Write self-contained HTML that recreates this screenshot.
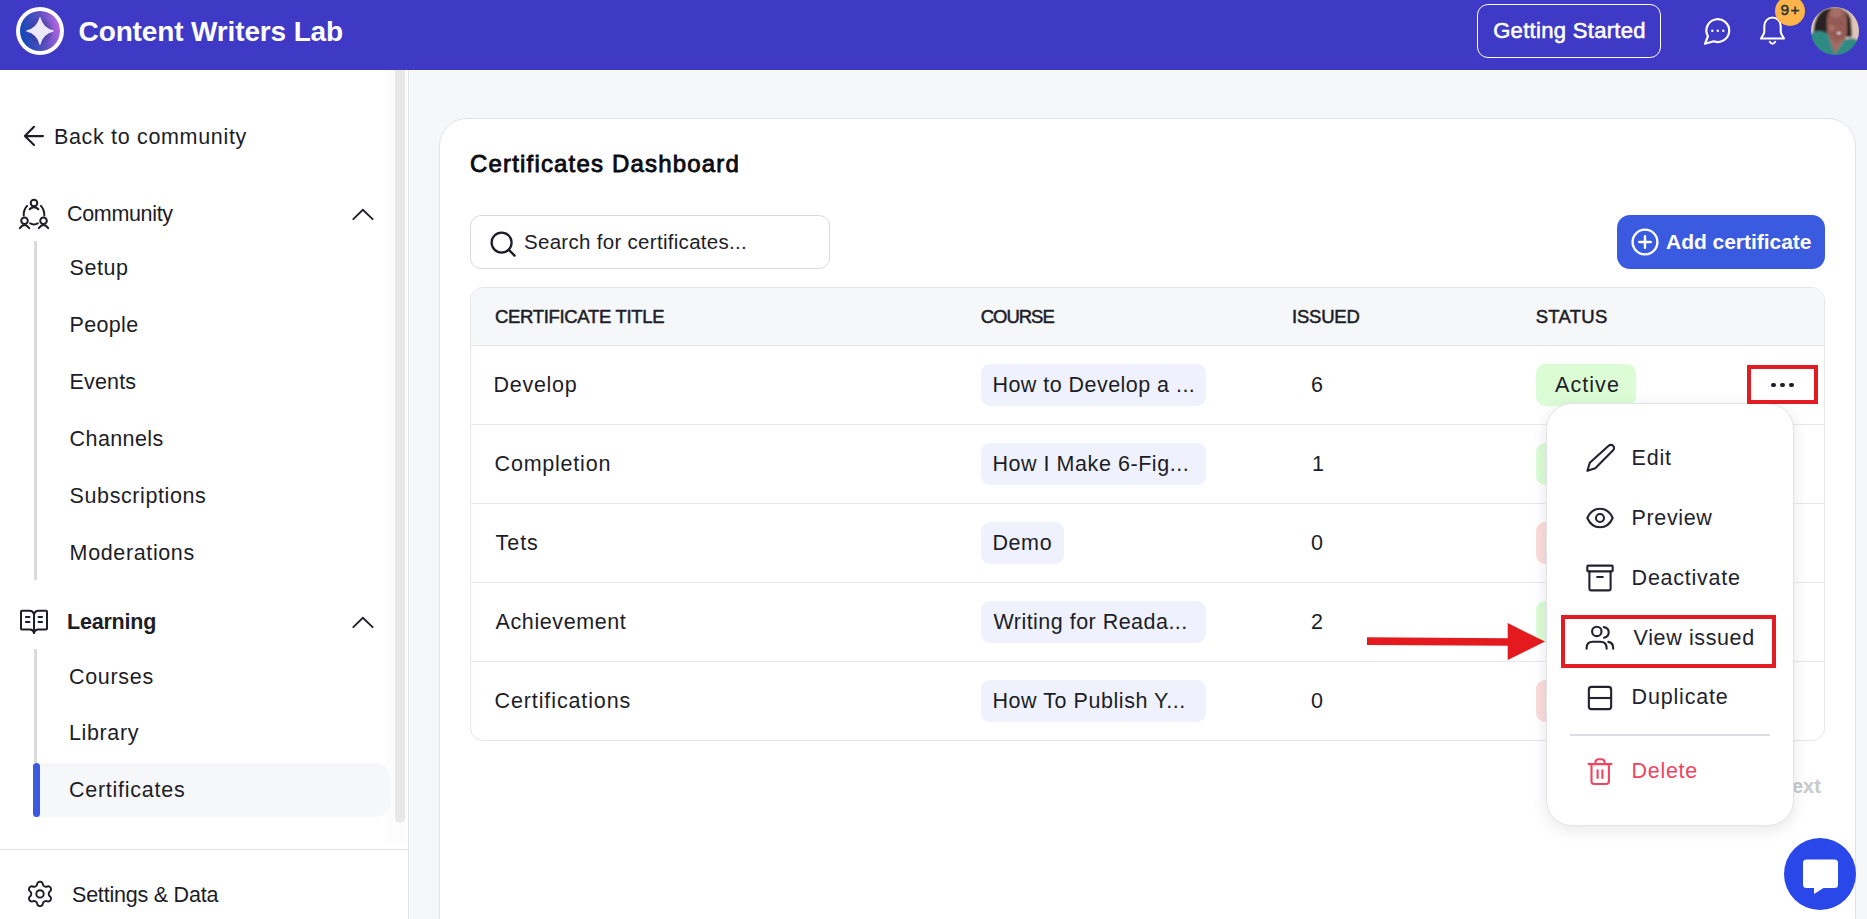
<!DOCTYPE html>
<html><head><meta charset="utf-8"><style>
*{box-sizing:border-box;margin:0;padding:0}
html,body{width:1867px;height:919px;overflow:hidden;background:#f6f7f9;font-family:"Liberation Sans",sans-serif;color:#1d1d27}
.a{position:absolute;white-space:nowrap}
.b{position:absolute}
svg{position:absolute;overflow:visible}
</style></head><body>
<div class="b" style="left:0;top:0;width:1867px;height:70px;background:#3e3ac6"></div>
<svg style="left:0;top:0" width="80" height="70" viewBox="0 0 80 70">
<defs><linearGradient id="lg" x1="0" y1="0.3" x2="1" y2="0.1"><stop offset="0" stop-color="#1848b8"/><stop offset="0.5" stop-color="#5a4fc0"/><stop offset="1" stop-color="#c46ae6"/></linearGradient>
<radialGradient id="rg" cx="0.5" cy="0.5" r="0.5"><stop offset="0.3" stop-color="#2a2070" stop-opacity="0.55"/><stop offset="1" stop-color="#2a2070" stop-opacity="0"/></radialGradient></defs>
<circle cx="40" cy="31" r="24" fill="#fff"/>
<circle cx="40" cy="31" r="20" fill="url(#lg)"/>
<circle cx="40" cy="31" r="14" fill="url(#rg)"/>
<path d="M40 17.9 Q42.6 28.2 53.3 31 Q42.6 33.8 40 44.2 Q37.4 33.8 26.7 31 Q37.4 28.2 40 17.9Z" fill="#ece8fb" stroke="#ece8fb" stroke-width="1.2" stroke-linejoin="round"/>
</svg>
<div class="a" style="left:78.60px;top:18.10px;font-size:28px;line-height:28px;font-weight:700;color:#fff;letter-spacing:-0.139px;">Content Writers Lab</div>

<div class="b" style="left:1477px;top:4px;width:184px;height:54px;border:1.5px solid #fff;border-radius:11px"></div>
<div class="a" style="left:1493.20px;top:19.58px;font-size:22px;line-height:22px;color:#fff;letter-spacing:0.314px;-webkit-text-stroke:0.55px #fff;">Getting Started</div>

<svg style="left:1699px;top:11px" width="36" height="36" viewBox="0 0 36 36">
<path d="M8.9 25.25 L6 32.8 L14.85 30.26 A11.4 11.4 0 1 0 8.9 25.25 Z" fill="none" stroke="#fff" stroke-width="2.2" stroke-linejoin="round"/>
<circle cx="13.3" cy="19.8" r="1.2" fill="#fff"/><circle cx="18.8" cy="19.8" r="1.2" fill="#fff"/><circle cx="24.3" cy="19.8" r="1.2" fill="#fff"/>
</svg>
<svg style="left:1755px;top:14px" width="36" height="36" viewBox="0 0 36 36">
<path d="M6 24.5 L29 24.5 L26.6 20.5 C26 19.5 25.7 18.5 25.7 17 L25.7 12 C25.7 7 21.8 3.5 17.5 3.5 C13.2 3.5 9.3 7 9.3 12 L9.3 17 C9.3 18.5 9 19.5 8.4 20.5 Z" fill="none" stroke="#fff" stroke-width="2.1" stroke-linejoin="round"/>
<path d="M14.8 27.8 C15.8 29.4 17 29.8 17.5 29.8 C18 29.8 19.2 29.4 20.2 27.8" fill="none" stroke="#fff" stroke-width="2.1" stroke-linecap="round"/>
</svg>
<div class="b" style="left:1775px;top:-4px;width:30px;height:30px;border-radius:50%;background:#fdb54b"></div>
<div class="a" style="left:1780.50px;top:1.88px;font-size:15.5px;line-height:15.5px;color:#263238;letter-spacing:1.300px;-webkit-text-stroke:0.45px #263238;">9+</div>

<svg style="left:1811px;top:7px" width="48" height="48" viewBox="0 0 48 48">
<defs><clipPath id="av"><circle cx="24" cy="24" r="24"/></clipPath><filter id="bl" x="-10%" y="-10%" width="120%" height="120%"><feGaussianBlur stdDeviation="1.0"/></filter></defs>
<g clip-path="url(#av)"><g filter="url(#bl)">
<rect x="-2" y="-2" width="52" height="52" fill="#ead8cd"/>
<rect x="37" y="-2" width="13" height="52" fill="#dfc6b9"/>
<path d="M3 32 C1 16 6 4 17 1 C27 -1 37 2 40 12 L41 30 L35 30 L34 10 L18 8 L17 30 Z" fill="#2b2320"/>
<path d="M16 13 C16 5 20 0 26 0 C32 0 36 5 36 13 L36 25 C36 32 32 37 26.5 37 C21 37 17 32 16 25Z" fill="#955b54"/>
<ellipse cx="25" cy="6" rx="6" ry="5" fill="#a8766c" opacity="0.8"/>
<ellipse cx="21" cy="21" rx="3" ry="3" fill="#b27a70" opacity="0.7"/>
<path d="M21 16 L24 15.5 M28 15.5 L31 16" stroke="#6b3f3a" stroke-width="1.2" opacity="0.6"/>
<ellipse cx="27.5" cy="26.5" rx="3.6" ry="2" fill="#7a2e36"/>
<ellipse cx="27.8" cy="26.2" rx="2.4" ry="1" fill="#fff"/>
<path d="M-2 28 C3 23 11 23 17 27 L24 46 L33 33 C39 30 45 31 50 35 L50 50 L-2 50Z" fill="#2f8b84"/>
<path d="M17 27 L23.5 47 L33 33 L33 30 C30 34 28 35 25 35 C21 34 18.5 30 17 25Z" fill="#a06a60"/>
</g></g></svg>
<div class="b" style="left:0;top:70px;width:408px;height:849px;background:#fff"></div>
<div class="b" style="left:408px;top:70px;width:1px;height:849px;background:#e4e5ea"></div>
<div class="b" style="left:386px;top:70px;width:20.5px;height:774px;background:#fcfcfc"></div>
<div class="b" style="left:395px;top:70px;width:10px;height:753px;background:#e8e8e8;border-radius:0 0 5px 5px"></div>
<div class="b" style="left:0;top:849px;width:408px;height:1px;background:#e1e2e7"></div>
<svg style="left:20px;top:122px" width="28" height="28" viewBox="0 0 28 28">
<path d="M23 14.1 L5.2 14.1 M14 4.8 L4.9 14.1 L14 23.1" fill="none" stroke="#1d1d27" stroke-width="2.1" stroke-linecap="round" stroke-linejoin="round"/></svg>
<div class="a" style="left:53.90px;top:126.80px;font-size:21.5px;line-height:21.5px;color:#1d1d27;letter-spacing:0.675px;">Back to community</div>

<svg style="left:17px;top:197px" width="34" height="34" viewBox="0 0 34 34">
<g fill="none" stroke="#1d1d27" stroke-width="2" stroke-linecap="round">
<circle cx="17" cy="6" r="3.3"/>
<path d="M12.6 12.2 Q17 8 21.4 12.2"/>
<path d="M10.1 8.9 Q6.6 12.5 6.7 18.5"/>
<path d="M23.9 8.9 Q27.4 12.5 27.3 18.5"/>
<circle cx="7.5" cy="23.7" r="3.3"/>
<circle cx="26.5" cy="23.7" r="3.3"/>
<path d="M2.8 31.1 Q7.5 24.9 12.2 31.1"/>
<path d="M21.8 31.1 Q26.5 24.9 31.2 31.1"/>
<path d="M13.2 26.4 Q17 28.4 20.8 26.4"/>
</g></svg>
<div class="a" style="left:67.00px;top:203.80px;font-size:21.5px;line-height:21.5px;color:#1d1d27;letter-spacing:-0.338px;">Community</div>

<svg style="left:350px;top:201.5px" width="26" height="24" viewBox="0 0 26 24">
<path d="M3.3 17.1 L12.9 7.9 L22.6 17.1" fill="none" stroke="#1d1d27" stroke-width="1.9" stroke-linecap="round" stroke-linejoin="miter"/></svg>
<svg style="left:350px;top:610px" width="26" height="24" viewBox="0 0 26 24">
<path d="M3.3 17.1 L12.9 7.9 L22.6 17.1" fill="none" stroke="#1d1d27" stroke-width="1.9" stroke-linecap="round" stroke-linejoin="miter"/></svg>
<div class="b" style="left:34px;top:241px;width:3px;height:339px;background:#dcd9da"></div>
<div class="a" style="left:69.60px;top:257.70px;font-size:21.5px;line-height:21.5px;color:#1d1d27;letter-spacing:0.525px;">Setup</div>

<div class="a" style="left:69.60px;top:314.70px;font-size:21.5px;line-height:21.5px;color:#1d1d27;letter-spacing:0.320px;">People</div>

<div class="a" style="left:69.60px;top:371.70px;font-size:21.5px;line-height:21.5px;color:#1d1d27;letter-spacing:0.140px;">Events</div>

<div class="a" style="left:69.60px;top:428.70px;font-size:21.5px;line-height:21.5px;color:#1d1d27;letter-spacing:0.400px;">Channels</div>

<div class="a" style="left:69.60px;top:485.70px;font-size:21.5px;line-height:21.5px;color:#1d1d27;letter-spacing:0.600px;">Subscriptions</div>

<div class="a" style="left:69.60px;top:542.70px;font-size:21.5px;line-height:21.5px;color:#1d1d27;letter-spacing:0.630px;">Moderations</div>

<svg style="left:17px;top:606px" width="34" height="32" viewBox="0 0 34 32">
<g fill="none" stroke="#1d1d27" stroke-width="2" stroke-linejoin="round" stroke-linecap="round">
<path d="M17 8.5 Q16 4.8 12.5 4.8 L5 4.8 Q4 4.8 4 5.8 L4 22.5 Q4 23.5 5 23.5 L13 23.5 Q16 23.5 17 26.8"/>
<path d="M17 8.5 Q18 4.8 21.5 4.8 L29 4.8 Q30 4.8 30 5.8 L30 22.5 Q30 23.5 29 23.5 L21 23.5 Q18 23.5 17 26.8"/>
<path d="M17 8.5 L17 26.8"/>
<path d="M9 11 L12.4 11 M9 16 L12.4 16 M21.6 11 L25 11 M21.6 16 L25 16" stroke-width="2.2"/>
</g></svg>
<div class="a" style="left:67.00px;top:611.80px;font-size:21.5px;line-height:21.5px;font-weight:700;color:#1d1d27;letter-spacing:-0.200px;">Learning</div>

<div class="b" style="left:34px;top:649px;width:3px;height:114px;background:#dcd9da"></div>
<div class="b" style="left:33px;top:763px;width:357px;height:54px;background:#f6f7f9;border-radius:0 14px 14px 0"></div>
<div class="b" style="left:33px;top:763px;width:7px;height:54px;background:#3a5ae0;border-radius:4px"></div>
<div class="a" style="left:69.00px;top:666.60px;font-size:21.5px;line-height:21.5px;color:#1d1d27;letter-spacing:0.683px;">Courses</div>

<div class="a" style="left:69.00px;top:723.20px;font-size:21.5px;line-height:21.5px;color:#1d1d27;letter-spacing:0.617px;">Library</div>

<div class="a" style="left:69.00px;top:779.80px;font-size:21.5px;line-height:21.5px;color:#1d1d27;letter-spacing:0.736px;">Certificates</div>

<svg style="left:24px;top:877px" width="32" height="34" viewBox="0 0 32 34">
<g fill="none" stroke="#1d1d27" stroke-width="1.9" stroke-linejoin="round">
<path d="M24.75 16.90 L24.78 17.28 L24.86 17.68 L25.00 18.08 L25.20 18.52 L25.49 19.00 L26.14 19.62 L26.76 20.29 L26.95 20.89 L27.01 21.46 L26.97 22.02 L26.83 22.54 L26.61 23.02 L26.30 23.46 L25.92 23.84 L25.46 24.16 L24.93 24.39 L24.31 24.52 L23.42 24.32 L22.57 24.07 L22.01 24.06 L21.53 24.10 L21.10 24.19 L20.72 24.31 L20.38 24.48 L20.06 24.69 L19.76 24.96 L19.47 25.29 L19.20 25.68 L18.92 26.17 L18.72 27.04 L18.44 27.91 L18.02 28.38 L17.56 28.72 L17.06 28.96 L16.53 29.10 L16.00 29.15 L15.47 29.10 L14.94 28.96 L14.44 28.72 L13.98 28.38 L13.56 27.91 L13.28 27.04 L13.08 26.17 L12.80 25.68 L12.53 25.29 L12.24 24.96 L11.94 24.69 L11.63 24.48 L11.28 24.31 L10.90 24.19 L10.47 24.10 L9.99 24.06 L9.43 24.07 L8.58 24.32 L7.69 24.52 L7.07 24.39 L6.54 24.16 L6.08 23.84 L5.70 23.46 L5.39 23.03 L5.17 22.54 L5.03 22.02 L4.99 21.46 L5.05 20.89 L5.24 20.29 L5.86 19.62 L6.51 19.00 L6.80 18.52 L7.00 18.08 L7.14 17.68 L7.22 17.28 L7.25 16.90 L7.22 16.52 L7.14 16.12 L7.00 15.72 L6.80 15.28 L6.51 14.80 L5.86 14.18 L5.24 13.51 L5.05 12.91 L4.99 12.34 L5.03 11.78 L5.17 11.26 L5.39 10.77 L5.70 10.34 L6.08 9.96 L6.54 9.64 L7.07 9.41 L7.69 9.28 L8.58 9.48 L9.43 9.73 L9.99 9.74 L10.47 9.70 L10.90 9.61 L11.28 9.49 L11.62 9.32 L11.94 9.11 L12.24 8.84 L12.53 8.51 L12.80 8.12 L13.08 7.63 L13.28 6.76 L13.56 5.89 L13.98 5.42 L14.44 5.08 L14.94 4.84 L15.47 4.70 L16.00 4.65 L16.53 4.70 L17.06 4.84 L17.56 5.08 L18.02 5.42 L18.44 5.89 L18.72 6.76 L18.92 7.63 L19.20 8.12 L19.47 8.51 L19.76 8.84 L20.06 9.11 L20.37 9.32 L20.72 9.49 L21.10 9.61 L21.53 9.70 L22.01 9.74 L22.57 9.73 L23.42 9.48 L24.31 9.28 L24.93 9.41 L25.46 9.64 L25.92 9.96 L26.30 10.34 L26.61 10.78 L26.83 11.26 L26.97 11.78 L27.01 12.34 L26.95 12.91 L26.76 13.51 L26.14 14.18 L25.49 14.80 L25.20 15.28 L25.00 15.72 L24.86 16.12 L24.78 16.52Z"/>
<circle cx="16" cy="16.9" r="3.7"/>
</g></svg>
<div class="a" style="left:72.00px;top:885.30px;font-size:21.5px;line-height:21.5px;color:#1d1d27;letter-spacing:-0.214px;">Settings &amp; Data</div>

<div class="b" style="left:439px;top:118px;width:1417px;height:850px;background:#fff;border:1px solid #e1e2e8;border-radius:28px"></div>
<div class="a" style="left:470.00px;top:151.88px;font-size:24px;line-height:24px;color:#0b0b12;letter-spacing:1.174px;-webkit-text-stroke:0.85px #0b0b12;">Certificates Dashboard</div>

<div class="b" style="left:470px;top:215px;width:360px;height:54px;border:1px solid #d9dae1;border-radius:11px;background:#fff"></div>
<svg style="left:486px;top:227px" width="34" height="34" viewBox="0 0 34 34">
<circle cx="15.6" cy="15.6" r="10" fill="none" stroke="#1d1d27" stroke-width="2.3"/>
<path d="M22.8 22.8 L28.6 28.6" stroke="#1d1d27" stroke-width="2.4" stroke-linecap="round"/></svg>
<div class="a" style="left:524.00px;top:231.55px;font-size:20.5px;line-height:20.5px;color:#1d1d27;letter-spacing:0.298px;">Search for certificates...</div>

<div class="b" style="left:1617px;top:215px;width:208px;height:54px;background:#3a5ae0;border-radius:13px"></div>
<svg style="left:1629px;top:226px" width="32" height="32" viewBox="0 0 32 32">
<circle cx="16" cy="16" r="12.4" fill="none" stroke="#fff" stroke-width="2.4"/>
<path d="M16 10.2 L16 21.8 M10.2 16 L21.8 16" stroke="#fff" stroke-width="2.4" stroke-linecap="round"/></svg>
<div class="a" style="left:1666.00px;top:231.12px;font-size:21px;line-height:21px;font-weight:700;color:#fff;letter-spacing:-0.029px;">Add certificate</div>

<div class="b" style="left:470px;top:287px;width:1355px;height:454px;border:1px solid #e5e6eb;border-radius:13px;overflow:hidden;background:#fff"><div class="b" style="left:0;top:0;width:1355px;height:58px;background:#f6f7f9;border-bottom:1px solid #e5e6eb"></div><div class="b" style="left:0;top:136px;width:1355px;height:1px;background:#e7e8ec"></div><div class="b" style="left:0;top:215px;width:1355px;height:1px;background:#e7e8ec"></div><div class="b" style="left:0;top:294px;width:1355px;height:1px;background:#e7e8ec"></div><div class="b" style="left:0;top:373px;width:1355px;height:1px;background:#e7e8ec"></div></div>
<div class="a" style="left:495.00px;top:307.74px;font-size:18.5px;line-height:18.5px;color:#1d1d27;letter-spacing:-0.325px;-webkit-text-stroke:0.5px #1d1d27;">CERTIFICATE TITLE</div>

<div class="a" style="left:980.70px;top:307.74px;font-size:18.5px;line-height:18.5px;color:#1d1d27;letter-spacing:-1.020px;-webkit-text-stroke:0.5px #1d1d27;">COURSE</div>

<div class="a" style="left:1292.00px;top:307.74px;font-size:18.5px;line-height:18.5px;color:#1d1d27;letter-spacing:-0.220px;-webkit-text-stroke:0.5px #1d1d27;">ISSUED</div>

<div class="a" style="left:1535.70px;top:307.74px;font-size:18.5px;line-height:18.5px;color:#1d1d27;letter-spacing:0.280px;-webkit-text-stroke:0.5px #1d1d27;">STATUS</div>

<div class="a" style="left:493.60px;top:375.00px;font-size:21.5px;line-height:21.5px;color:#1d1d27;letter-spacing:0.700px;">Develop</div>

<div class="b" style="left:981px;top:364.0px;width:225px;height:42px;background:#eff2fd;border-radius:9px"></div>
<div class="a" style="left:992.40px;top:375.00px;font-size:21.5px;line-height:21.5px;color:#1d1d27;letter-spacing:0.466px;">How to Develop a ...</div>

<div class="a" style="left:1311.10px;top:375.00px;font-size:21.5px;line-height:21.5px;color:#1d1d27;">6</div>

<div class="b" style="left:1536px;top:364.0px;width:100px;height:42px;background:#dcfcd6;border-radius:9px"></div>
<div class="a" style="left:1555.00px;top:375.00px;font-size:21.5px;line-height:21.5px;color:#1d1d27;letter-spacing:1.060px;">Active</div>

<div class="a" style="left:494.60px;top:454.00px;font-size:21.5px;line-height:21.5px;color:#1d1d27;letter-spacing:0.778px;">Completion</div>

<div class="b" style="left:981px;top:443.0px;width:225px;height:42px;background:#eff2fd;border-radius:9px"></div>
<div class="a" style="left:992.40px;top:454.00px;font-size:21.5px;line-height:21.5px;color:#1d1d27;letter-spacing:0.550px;">How I Make 6-Fig...</div>

<div class="a" style="left:1312.00px;top:454.00px;font-size:21.5px;line-height:21.5px;color:#1d1d27;">1</div>

<div class="b" style="left:1536px;top:443.0px;width:100px;height:42px;background:#dcfcd6;border-radius:9px"></div>
<div class="a" style="left:495.60px;top:533.00px;font-size:21.5px;line-height:21.5px;color:#1d1d27;letter-spacing:0.933px;">Tets</div>

<div class="b" style="left:981px;top:522.0px;width:82.5px;height:42px;background:#eff2fd;border-radius:9px"></div>
<div class="a" style="left:992.40px;top:533.00px;font-size:21.5px;line-height:21.5px;color:#1d1d27;letter-spacing:0.617px;">Demo</div>

<div class="a" style="left:1311.10px;top:533.00px;font-size:21.5px;line-height:21.5px;color:#1d1d27;">0</div>

<div class="b" style="left:1536px;top:522.0px;width:100px;height:42px;background:#fbdcdc;border-radius:9px"></div>
<div class="a" style="left:495.60px;top:612.00px;font-size:21.5px;line-height:21.5px;color:#1d1d27;letter-spacing:0.590px;">Achievement</div>

<div class="b" style="left:981px;top:601.0px;width:225px;height:42px;background:#eff2fd;border-radius:9px"></div>
<div class="a" style="left:993.40px;top:612.00px;font-size:21.5px;line-height:21.5px;color:#1d1d27;letter-spacing:0.476px;">Writing for Reada...</div>

<div class="a" style="left:1311.10px;top:612.00px;font-size:21.5px;line-height:21.5px;color:#1d1d27;">2</div>

<div class="b" style="left:1536px;top:601.0px;width:100px;height:42px;background:#dcfcd6;border-radius:9px"></div>
<div class="a" style="left:494.60px;top:691.00px;font-size:21.5px;line-height:21.5px;color:#1d1d27;letter-spacing:0.877px;">Certifications</div>

<div class="b" style="left:981px;top:680.0px;width:225px;height:42px;background:#eff2fd;border-radius:9px"></div>
<div class="a" style="left:992.40px;top:691.00px;font-size:21.5px;line-height:21.5px;color:#1d1d27;letter-spacing:0.556px;">How To Publish Y...</div>

<div class="a" style="left:1311.10px;top:691.00px;font-size:21.5px;line-height:21.5px;color:#1d1d27;">0</div>

<div class="b" style="left:1536px;top:680.0px;width:100px;height:42px;background:#fbdcdc;border-radius:9px"></div>
<div class="b" style="left:1771.2px;top:382.7px;width:4.6px;height:4.6px;border-radius:50%;background:#1d1d27"></div>
<div class="b" style="left:1780.2px;top:382.7px;width:4.6px;height:4.6px;border-radius:50%;background:#1d1d27"></div>
<div class="b" style="left:1789.2px;top:382.7px;width:4.6px;height:4.6px;border-radius:50%;background:#1d1d27"></div>
<div class="a" style="left:1792.00px;top:776.37px;font-size:20px;line-height:20px;font-weight:700;color:#c9cacd;">ext</div>

<div class="b" style="left:1545.5px;top:403px;width:248px;height:423px;background:#fff;border:1px solid #e2e3e8;border-radius:26px;box-shadow:0 4px 16px rgba(20,20,40,0.10)"></div>
<svg style="left:1582px;top:440px" width="36" height="36" viewBox="0 0 36 36">
<path d="M26.6 5.8 C27.9 4.5 29.9 4.5 31.1 5.8 C32.4 7.1 32.4 9 31.1 10.3 L13.3 28.2 L5.4 30.8 L7.8 22.8 Z" fill="none" stroke="#23232f" stroke-width="2.1" stroke-linejoin="round"/></svg>
<div class="a" style="left:1631.60px;top:447.60px;font-size:21.5px;line-height:21.5px;color:#23232f;letter-spacing:0.767px;">Edit</div>

<svg style="left:1582px;top:500px" width="36" height="36" viewBox="0 0 36 36">
<path d="M5.3 18 C8 11.8 12.7 8.7 18 8.7 C23.3 8.7 28 11.8 30.7 18 C28 24.2 23.3 27.3 18 27.3 C12.7 27.3 8 24.2 5.3 18 Z" fill="none" stroke="#23232f" stroke-width="2.1" stroke-linejoin="round"/>
<circle cx="18" cy="18" r="4" fill="none" stroke="#23232f" stroke-width="2.1"/></svg>
<div class="a" style="left:1631.60px;top:508.30px;font-size:21.5px;line-height:21.5px;color:#23232f;letter-spacing:0.617px;">Preview</div>

<svg style="left:1582px;top:560px" width="36" height="36" viewBox="0 0 36 36">
<g fill="none" stroke="#23232f" stroke-width="2.1" stroke-linejoin="round" stroke-linecap="round">
<rect x="5.3" y="5.6" width="25.4" height="5.8" rx="1.2"/>
<path d="M7.4 11.4 L7.4 28.5 Q7.4 30.4 9.3 30.4 L26.7 30.4 Q28.6 30.4 28.6 28.5 L28.6 11.4"/>
<path d="M15.2 17 L20.8 17"/></g></svg>
<div class="a" style="left:1631.60px;top:568.30px;font-size:21.5px;line-height:21.5px;color:#23232f;letter-spacing:0.756px;">Deactivate</div>

<svg style="left:1582px;top:620px" width="36" height="36" viewBox="0 0 36 36">
<g fill="none" stroke="#23232f" stroke-width="2.1" stroke-linecap="round" stroke-linejoin="round">
<circle cx="14.8" cy="11.4" r="4.7"/>
<path d="M4.6 28.8 L4.6 28 Q4.6 21.8 11 21.8 L18.2 21.8 Q24.6 21.8 24.6 28 L24.6 28.8"/>
<path d="M21.8 7.1 Q26.7 7.9 26.7 12.3 Q26.7 16.8 22 17.7"/>
<path d="M26.3 21.9 Q31.2 22.8 31.2 28 L31.2 28.8"/></g></svg>
<div class="a" style="left:1633.60px;top:628.40px;font-size:21.5px;line-height:21.5px;color:#23232f;letter-spacing:0.620px;">View issued</div>

<svg style="left:1582px;top:680px" width="36" height="36" viewBox="0 0 36 36">
<g fill="none" stroke="#23232f" stroke-width="2.1" stroke-linejoin="round">
<rect x="6.85" y="6.85" width="22.3" height="22.3" rx="2.6"/>
<path d="M6.85 18 L29.15 18"/></g></svg>
<div class="a" style="left:1631.60px;top:687.20px;font-size:21.5px;line-height:21.5px;color:#23232f;letter-spacing:0.812px;">Duplicate</div>

<div class="b" style="left:1570px;top:734px;width:200px;height:2px;background:#dcdde3"></div>
<svg style="left:1582px;top:754px" width="36" height="36" viewBox="0 0 36 36">
<g fill="none" stroke="#ee4662" stroke-width="2.1" stroke-linecap="round" stroke-linejoin="round">
<path d="M6.5 10.1 L29.5 10.1"/>
<path d="M13.4 10.1 L13.4 8.6 Q13.4 5.3 16.7 5.3 L19.3 5.3 Q22.6 5.3 22.6 8.6 L22.6 10.1"/>
<path d="M9.5 10.1 L9.5 27.3 Q9.5 30 12.2 30 L24.2 30 Q26.9 30 26.9 27.3 L26.9 10.1"/>
<path d="M15.6 16.3 L15.6 23.9 M20.4 16.3 L20.4 23.9"/></g></svg>
<div class="a" style="left:1631.60px;top:760.60px;font-size:21.5px;line-height:21.5px;color:#ee4662;letter-spacing:0.680px;">Delete</div>

<div class="b" style="left:1747px;top:365px;width:71px;height:38.8px;border:4.6px solid #e31b23"></div>
<div class="b" style="left:1561px;top:615px;width:215px;height:52.6px;border:4.7px solid #e31b23"></div>
<svg style="left:0;top:0" width="1867" height="919" viewBox="0 0 1867 919">
<path d="M1367 637.3 L1508 638.2 L1508 645.8 L1367 645 Z" fill="#e31b1f"/>
<path d="M1507.7 623.1 L1545 641.5 L1507.7 660.1 Z" fill="#e31b1f"/></svg>
<div class="b" style="left:1784px;top:838px;width:72px;height:72px;border-radius:50%;background:#2a48ea"></div>
<svg style="left:1784px;top:838px" width="72" height="72" viewBox="0 0 72 72">
<path d="M22.5 21.5 Q19 21.5 19 25 L19 46.5 Q19 50 22.5 50 L30 50 L30 56 L39.5 50 L50.5 50 Q54 50 54 46.5 L54 25 Q54 21.5 50.5 21.5 Z" fill="#fff"/></svg>
</body></html>
